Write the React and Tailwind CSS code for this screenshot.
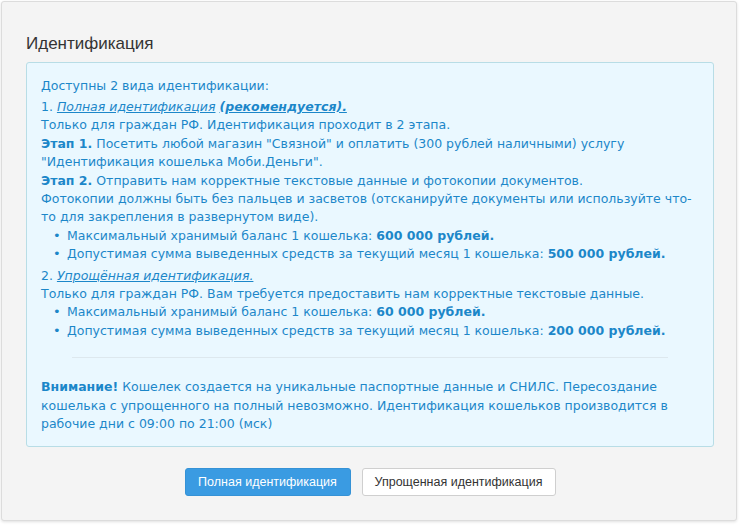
import React from 'react';

const verdana = { fontFamily: '"DejaVu Sans", Verdana, sans-serif' };

function Bullet({ children }) {
  return (
    <li className="flex items-start pl-[12px]">
      <span className="w-[14px] shrink-0 text-[13px] leading-[18.4px]">•</span>
      <span>{children}</span>
    </li>
  );
}

export default function App() {
  return (
    <div className="w-[741px] h-[525px] bg-white p-[1px] pr-[4px] pb-[4px]">
      <div className="h-full bg-[#f4f4f4] border border-[#dcdcdc] rounded-[3px] shadow-[0_1px_3px_rgba(0,0,0,0.12)] pl-[24px] pr-[22px] pt-[30px]">
        <h2 className="text-[17px] leading-[24px] text-[#333] font-['Liberation_Sans',Arial,sans-serif] mb-[6px]">
          Идентификация
        </h2>

        {/* инфо-блок */}
        <div
          className="bg-[#eaf8ff] border border-[#b8dde6] rounded-[3px] px-[14px] pt-[14px] pb-[13px] text-[12.5px] leading-[18.4px] text-[#1c87c9]"
          style={verdana}
        >
          <p className="mb-[2.5px]">Доступны 2 вида идентификации:</p>
          <p>
            1. <a className="italic underline">Полная идентификация</a>{' '}
            <b className="italic underline">(рекомендуется).</b>
          </p>
          <p>Только для граждан РФ. Идентификация проходит в 2 этапа.</p>
          <p>
            <b>Этап 1.</b> Посетить любой магазин "Связной" и оплатить (300 рублей наличными) услугу
            "Идентификация кошелька Моби.Деньги".
          </p>
          <p>
            <b>Этап 2.</b> Отправить нам корректные текстовые данные и фотокопии документов.
          </p>
          <p>
            Фотокопии должны быть без пальцев и засветов (отсканируйте документы или используйте что-то
            для закрепления в развернутом виде).
          </p>
          <ul>
            <Bullet>
              Максимальный хранимый баланс 1 кошелька: <b>600 000 рублей.</b>
            </Bullet>
            <Bullet>
              Допустимая сумма выведенных средств за текущий месяц 1 кошелька: <b>500 000 рублей.</b>
            </Bullet>
          </ul>
          <p className="mt-[3px]">
            2. <a className="italic underline">Упрощённая идентификация.</a>
          </p>
          <p>Только для граждан РФ. Вам требуется предоставить нам корректные текстовые данные.</p>
          <ul>
            <Bullet>
              Максимальный хранимый баланс 1 кошелька: <b>60 000 рублей.</b>
            </Bullet>
            <Bullet>
              Допустимая сумма выведенных средств за текущий месяц 1 кошелька: <b>200 000 рублей.</b>
            </Bullet>
          </ul>

          <div className="mx-[31px] mt-[17px] mb-[20px] border-t border-[#dde8ee]" />

          <p>
            <b>Внимание!</b> Кошелек создается на уникальные паспортные данные и СНИЛС. Пересоздание
            кошелька с упрощенного на полный невозможно. Идентификация кошельков производится в
            рабочие дни с 09:00 по 21:00 (мск)
          </p>
        </div>

        {/* кнопки */}
        <div className="flex justify-center gap-[11px] mt-[21px] font-['Liberation_Sans',Arial,sans-serif] text-[12.5px]">
          <button className="w-[166px] h-[28px] rounded-[3px] bg-[#3a9be2] border border-[#3592d6] text-white">
            Полная идентификация
          </button>
          <button className="w-[194px] h-[28px] rounded-[3px] bg-white border border-[#cfcfcf] text-[#333]">
            Упрощенная идентификация
          </button>
        </div>
      </div>
    </div>
  );
}
